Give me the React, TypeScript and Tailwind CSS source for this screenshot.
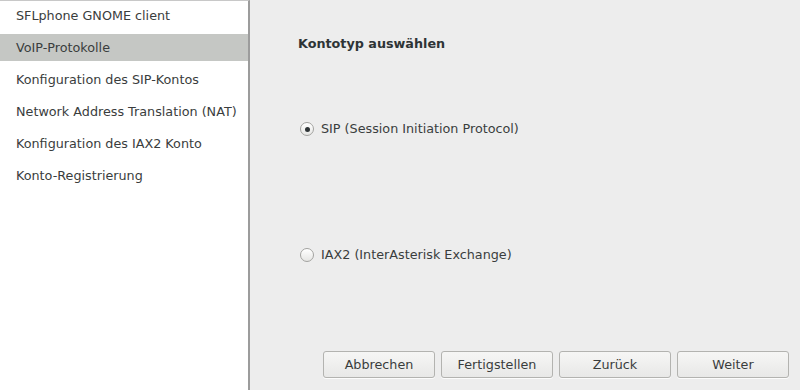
import React from "react";

const items = [
  "SFLphone GNOME client",
  "VoIP-Protokolle",
  "Konfiguration des SIP-Kontos",
  "Network Address Translation (NAT)",
  "Konfiguration des IAX2 Konto",
  "Konto-Registrierung",
];

function Radio({ checked }: { checked?: boolean }) {
  return (
    <span className="flex h-[14px] w-[14px] items-center justify-center rounded-full border border-[#a3a3a0] bg-gradient-to-b from-white to-[#e6e6e4] shadow-[inset_0_1px_0_white]">
      {checked && <span className="h-[5px] w-[5px] rounded-full bg-[#2e3436]" />}
    </span>
  );
}

function Btn({ label }: { label: string }) {
  return (
    <button className="flex h-[27px] w-[112px] items-center justify-center rounded-[3px] border border-[#b3b3b0] bg-gradient-to-b from-[#f6f6f5] to-[#e8e8e7] text-[12.75px] text-[#3a3d3d] shadow-[0_1px_0_rgba(255,255,255,0.8)]">
      {label}
    </button>
  );
}

export default function App() {
  return (
    <div
      className="flex h-[390px] w-[800px] bg-[#ededed] text-[12.75px] text-[#3a3d3d]"
      style={{ fontFamily: '"DejaVu Sans", sans-serif' }}
    >
      <div className="flex w-[250px] flex-col gap-[5px] border-t border-t-[#c8c8c8] border-r-2 border-r-[#9c9c9c] bg-white pt-[1px]">
        {items.map((t, i) => (
          <div
            key={t}
            className={`flex h-[27px] items-center pl-[16px] ${i === 1 ? "bg-[#c5c7c4]" : ""}`}
          >
            {t}
          </div>
        ))}
      </div>
      <div className="flex flex-1 flex-col">
        <div className="pl-[48px] pt-[35px] text-[12.75px] font-bold leading-[18px] text-[#2e3436]">Kontotyp auswählen</div>
        <div className="mt-[67px] flex h-[18px] items-center gap-[7px] pl-[50px]">
          <Radio checked />
          <span>SIP (Session Initiation Protocol)</span>
        </div>
        <div className="mt-[108px] flex h-[18px] items-center gap-[7px] pl-[50px]">
          <Radio />
          <span>IAX2 (InterAsterisk Exchange)</span>
        </div>
        <div className="mt-auto mb-[12px] flex justify-end gap-[6px] pr-[11px]">
          <Btn label="Abbrechen" />
          <Btn label="Fertigstellen" />
          <Btn label="Zurück" />
          <Btn label="Weiter" />
        </div>
      </div>
    </div>
  );
}
